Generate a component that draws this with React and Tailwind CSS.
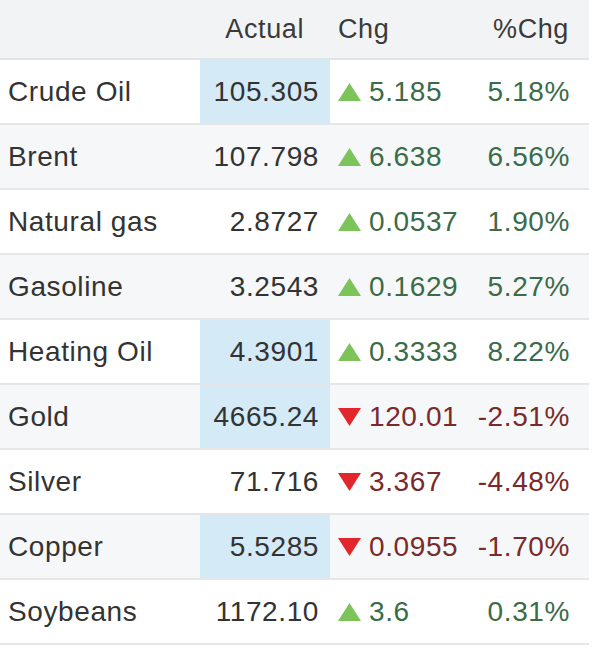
import React from "react";

const rows = [
  { name: "Crude Oil", actual: "105.305", chg: "5.185", pct: "5.18%", up: true, hl: true },
  { name: "Brent", actual: "107.798", chg: "6.638", pct: "6.56%", up: true },
  { name: "Natural gas", actual: "2.8727", chg: "0.0537", pct: "1.90%", up: true },
  { name: "Gasoline", actual: "3.2543", chg: "0.1629", pct: "5.27%", up: true },
  { name: "Heating Oil", actual: "4.3901", chg: "0.3333", pct: "8.22%", up: true, hl: true },
  { name: "Gold", actual: "4665.24", chg: "120.01", pct: "-2.51%", up: false, hl: true },
  { name: "Silver", actual: "71.716", chg: "3.367", pct: "-4.48%", up: false },
  { name: "Copper", actual: "5.5285", chg: "0.0955", pct: "-1.70%", up: false, hl: true },
  { name: "Soybeans", actual: "1172.10", chg: "3.6", pct: "0.31%", up: true },
];

function Up() {
  return (
    <svg width="23" height="18" viewBox="0 0 23 18" className="shrink-0">
      <polygon points="11.5,0 23,18 0,18" fill="#7cc35a" />
    </svg>
  );
}
function Down() {
  return (
    <svg width="23" height="18" viewBox="0 0 23 18" className="shrink-0">
      <polygon points="0,0 23,0 11.5,18" fill="#e3262b" />
    </svg>
  );
}

export default function App() {
  return (
    <div className="w-[600px] h-[653px] bg-white font-['Liberation_Sans'] text-[#333] tracking-[0.6px]">
      <div className="w-[589px]">
        <div className="grid grid-cols-[200px_130px_1fr_120px] h-[60px] items-center bg-[#f2f3f4] border-b-2 border-[#e2e4e5] text-[27px] text-[#3a3a3a]">
          <div />
          <div className="text-right pr-[26px]">Actual</div>
          <div className="pl-[8px]">Chg</div>
          <div className="text-right pr-[20px]">%Chg</div>
        </div>
        {rows.map((r, i) => (
          <div
            key={r.name}
            className={`grid grid-cols-[200px_130px_1fr_120px] h-[65px] border-b-2 border-[#e4e6e7] text-[28px] ${
              i % 2 === 1 ? "bg-[#f5f7f8]" : "bg-white"
            }`}
          >
            <div className="flex items-center pl-[8px]">{r.name}</div>
            <div
              className={`flex items-center justify-end pr-[11px] ${r.hl ? "bg-[#d4eaf6]" : ""}`}
            >
              {r.actual}
            </div>
            <div
              className={`flex items-center gap-[8px] pl-[8px] ${
                r.up ? "text-[#3b6b48]" : "text-[#7a2a2a]"
              }`}
            >
              {r.up ? <Up /> : <Down />}
              <span>{r.chg}</span>
            </div>
            <div
              className={`flex items-center justify-end pr-[19px] ${
                r.up ? "text-[#3b6b48]" : "text-[#7a2a2a]"
              }`}
            >
              {r.pct}
            </div>
          </div>
        ))}
      </div>
    </div>
  );
}
